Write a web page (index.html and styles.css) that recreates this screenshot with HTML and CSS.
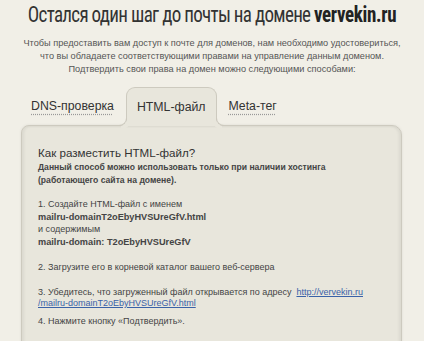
FILE: index.html
```html
<!DOCTYPE html>
<html lang="ru">

<head>
    <meta charset="UTF-8">
    <title>Подтверждение домена</title>
    <link rel="stylesheet" href="styles.css">
</head>

<body>
    <h1>Остался один шаг до почты на домене <b>vervekin.ru</b></h1>
    <p class="intro">
        Чтобы предоставить вам доступ к почте для доменов, нам необходимо удостовериться,<br>
        что вы обладаете соответствующими правами на управление данным доменом.<br>
        Подтвердить свои права на домен можно следующими способами:
    </p>
    <div class="tabs">
        <span class="tab">DNS-проверка</span>
        <span class="tab active">HTML-файл</span>
        <span class="tab">Meta-тег</span>
    </div>
    <div class="panel">
        <h2>Как разместить HTML-файл?</h2>
        <p class="note">Данный способ можно использовать только при наличии хостинга<br>(работающего сайта на домене).</p>
        <p>1. Создайте HTML-файл с именем<br>
            <b>mailru-domainT2oEbyHVSUreGfV.html</b><br>
            и содержимым<br>
            <b>mailru-domain: T2oEbyHVSUreGfV</b>
        </p>
        <p>2. Загрузите его в корневой каталог вашего веб-сервера</p>
        <p class="url">3. Убедитесь, что загруженный файл открывается по адресу &nbsp;<a href="#">http://vervekin.ru<br>/mailru-domainT2oEbyHVSUreGfV.html</a></p>
        <p>4. Нажмите кнопку «Подтвердить».</p>
    </div>
</body>

</html>
```

FILE: styles.css
```css
body {
    background-color: #f1efe7;
    color: #444;
    font-family: "Liberation Sans", Arial, sans-serif;
    margin: 0;
    padding: 0;
}

h1 {
    font-family: "Roboto Condensed", "Liberation Sans", sans-serif;
    font-weight: normal;
    font-size: 22px;
    letter-spacing: -0.8px;
    line-height: 26px;
    color: #333;
    text-align: center;
    white-space: nowrap;
    margin: 2px -40px 0;
    transform: scaleX(0.865);
}

h1 b {
    color: #222;
    letter-spacing: -0.4px;
}

.intro {
    font-size: 9.2px;
    line-height: 13px;
    color: #555;
    text-align: center;
    margin: 8.5px 0 0;
}

.tabs {
    display: flex;
    gap: 2px;
    margin: 11.5px 0 0 21px;
}

.tab {
    font-size: 12.3px;
    color: #333;
    padding: 12px 10px 0;
    height: 26px;
    text-decoration: underline dotted #999;
    text-underline-offset: 4px;
}

.tab.active {
    text-decoration: none;
    background-color: #e8e6dc;
    border: 1px solid #cdcabf;
    border-bottom: none;
    border-radius: 9px 9px 0 0;
    margin-bottom: -1px;
    position: relative;
    z-index: 1;
}

/* inverted corners where the tab meets the panel */
.tab.active::before,
.tab.active::after {
    content: "";
    position: absolute;
    bottom: 0;
    width: 8px;
    height: 8px;
    border-bottom: 1px solid #cdcabf;
}

.tab.active::before {
    left: -9px;
    border-right: 1px solid #cdcabf;
    border-bottom-right-radius: 8px;
    box-shadow: 3px 3px 0 #e8e6dc;
}

.tab.active::after {
    right: -9px;
    border-left: 1px solid #cdcabf;
    border-bottom-left-radius: 8px;
    box-shadow: -3px 3px 0 #e8e6dc;
}

.panel {
    margin: 0 22px 0 21px;
    padding: 18.5px 16px 10px;
    background-color: #e8e6dc;
    border: 1px solid #cdcabf;
    border-radius: 8px 10px 0 0;
    box-shadow: inset 2px 0 3px rgba(0, 0, 0, 0.06), inset -2px 0 3px rgba(0, 0, 0, 0.06), 0 0 3px rgba(0, 0, 0, 0.08);
    font-size: 9px;
    line-height: 12.5px;
    color: #444;
}

h2 {
    font-size: 11.6px;
    line-height: 15px;
    font-weight: normal;
    color: #333;
    margin: 0 0 1px;
}

.panel p {
    margin: 0 0 12.5px;
}

.panel .note {
    font-weight: bold;
    font-size: 8.6px;
    line-height: 13px;
    margin-bottom: 11.5px;
}

.panel b {
    font-size: 9.2px;
}

.panel .url {
    line-height: 11px;
    margin-top: 14px;
    margin-bottom: 5.5px;
}

a {
    color: #3a62a8;
}
```
